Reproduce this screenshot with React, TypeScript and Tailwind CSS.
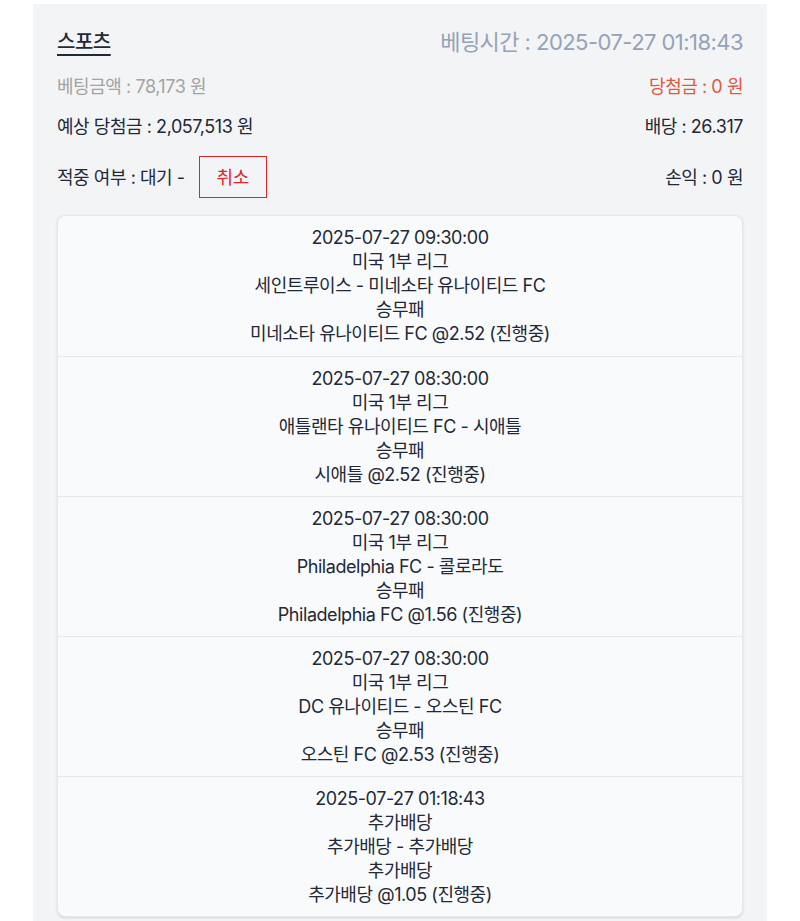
import React from 'react';

const font = { fontFamily: "Inter, 'Noto Sans CJK KR', sans-serif" };

type Pick = {
  time: string;
  league: string;
  match: string;
  market: string;
  pick: string;
};

const picks: Pick[] = [
  {
    time: '2025-07-27 09:30:00',
    league: '미국 1부 리그',
    match: '세인트루이스 - 미네소타 유나이티드 FC',
    market: '승무패',
    pick: '미네소타 유나이티드 FC @2.52 (진행중)',
  },
  {
    time: '2025-07-27 08:30:00',
    league: '미국 1부 리그',
    match: '애틀랜타 유나이티드 FC - 시애틀',
    market: '승무패',
    pick: '시애틀 @2.52 (진행중)',
  },
  {
    time: '2025-07-27 08:30:00',
    league: '미국 1부 리그',
    match: 'Philadelphia FC - 콜로라도',
    market: '승무패',
    pick: 'Philadelphia FC @1.56 (진행중)',
  },
  {
    time: '2025-07-27 08:30:00',
    league: '미국 1부 리그',
    match: 'DC 유나이티드 - 오스틴 FC',
    market: '승무패',
    pick: '오스틴 FC @2.53 (진행중)',
  },
  {
    time: '2025-07-27 01:18:43',
    league: '추가배당',
    match: '추가배당 - 추가배당',
    market: '추가배당',
    pick: '추가배당 @1.05 (진행중)',
  },
];

export default function App() {
  return (
    <div className="min-h-screen bg-white pt-1" style={font}>
      <div className="mx-auto w-[734px] bg-[#f3f4f6] px-6 pt-[22px] pb-6 text-[#1f2937]">
        <div className="flex items-center justify-between h-8">
          <span className="text-[20px] font-medium underline underline-offset-[5px] tracking-tight">스포츠</span>
          <span className="text-[22px] text-[#94a3b8] tracking-tight">베팅시간 : 2025-07-27 01:18:43</span>
        </div>

        <div className="mt-[14px] flex items-center justify-between h-7 text-[18px] tracking-tight">
          <span className="text-[#a3a3a3]">베팅금액 : 78,173 원</span>
          <span className="text-[#e4573f]">당첨금 : 0 원</span>
        </div>

        <div className="mt-3 flex items-center justify-between h-7 text-[18px] tracking-tight">
          <span>예상 당첨금 : 2,057,513 원</span>
          <span>배당 : 26.317</span>
        </div>

        <div className="mt-4 flex items-center justify-between h-[42px] text-[18px] tracking-tight">
          <div className="flex items-center">
            <span>적중 여부 : 대기 -</span>
            <button className="ml-[14px] w-[68px] h-[42px] border border-[#dc2626] text-[#dc2626] text-[18px]">
              취소
            </button>
          </div>
          <span>손익 : 0 원</span>
        </div>

        <div className="mt-[17px] rounded-lg border border-[#e5e7eb] bg-[#f9fafb] shadow-sm">
          {picks.map((p, i) => (
            <div
              key={i}
              className={`flex h-[140px] flex-col justify-center text-center text-[18px] leading-6 tracking-tight ${i > 0 ? 'border-t border-[#e5e7eb]' : ''}`}
            >
              <div>{p.time}</div>
              <div>{p.league}</div>
              <div>{p.match}</div>
              <div>{p.market}</div>
              <div>{p.pick}</div>
            </div>
          ))}
        </div>
      </div>
    </div>
  );
}
